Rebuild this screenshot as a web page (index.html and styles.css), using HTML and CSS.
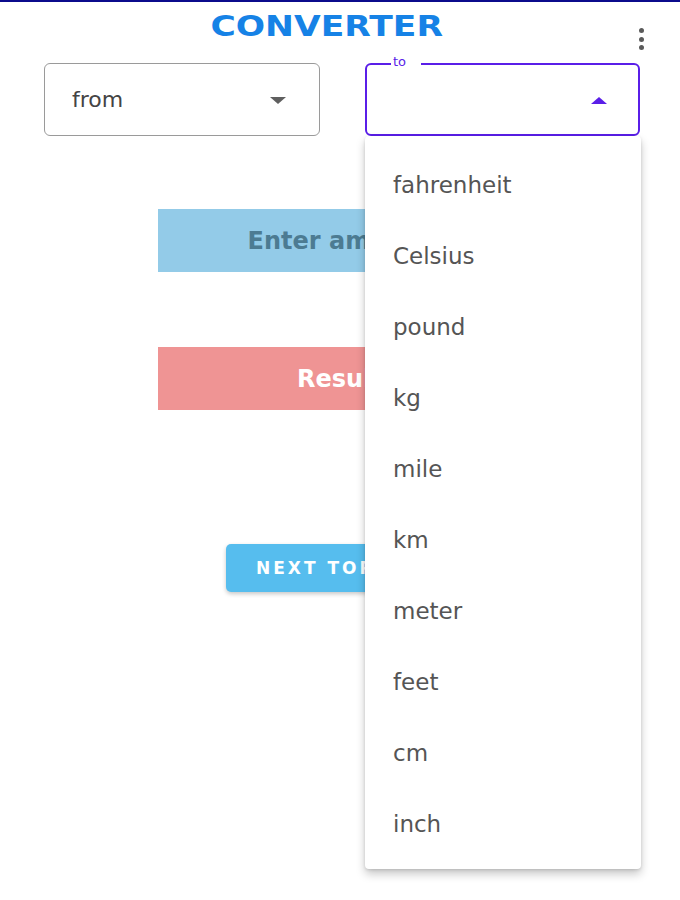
FILE: index.html
```html
<!DOCTYPE html>
<html lang="en">
<head>
<meta charset="utf-8">
<title>Converter</title>
<link rel="stylesheet" href="styles.css">
</head>
<body>
<div class="topline"></div>
<header class="header">
  <div></div>
  <h1 class="title">CONVERTER</h1>
  <div class="more" aria-label="More options"><span></span><span></span><span></span></div>
</header>
<div class="selects">
  <div class="select select-from">
    <span class="select-text">from</span>
    <svg class="caret" width="16" height="7" viewBox="0 0 16 7"><path d="M0 0 H16 L8 7 Z" fill="#5f5f5f"/></svg>
  </div>
  <div class="select select-to">
    <span class="float-label">to</span>
    <span class="select-text"></span>
    <svg class="caret" width="16" height="7" viewBox="0 0 16 7"><path d="M0 7 H16 L8 0 Z" fill="#5a1ee8"/></svg>
    <ul class="menu">
      <li>fahrenheit</li>
      <li>Celsius</li>
      <li>pound</li>
      <li>kg</li>
      <li>mile</li>
      <li>km</li>
      <li>meter</li>
      <li>feet</li>
      <li>cm</li>
      <li>inch</li>
    </ul>
  </div>
</div>
<main class="content">
  <div class="bar bar-input">Enter amount</div>
  <div class="bar bar-result">Result</div>
  <button class="next">NEXT TOPIC</button>
</main>
</body>
</html>
```
FILE: styles.css
```css
* { box-sizing: border-box; }
html, body { margin: 0; padding: 0; background: #fff; }
body {
  font-family: "DejaVu Sans", "Liberation Sans", sans-serif;
  width: 680px;
  height: 900px;
  overflow: hidden;
}
.topline { height: 2px; background: #0b0b8c; }
.header {
  display: grid;
  grid-template-columns: 1fr auto 1fr;
  height: 61px;
}
.title {
  margin: 7px 0 0;
  font-family: "DejaVu Sans", sans-serif;
  font-weight: bold;
  font-size: 29px;
  line-height: 34px;
  color: #1682e6;
  transform: translateX(-13px) scaleX(1.19);
  align-self: start;
}
.more {
  justify-self: end;
  margin: 26px 36px 0 0;
  display: flex;
  flex-direction: column;
  gap: 3.5px;
  align-self: start;
}
.more span {
  display: block;
  width: 5px;
  height: 5px;
  border-radius: 50%;
  background: #5a5a5a;
}
.selects {
  display: flex;
  gap: 45px;
  padding: 0 40px 0 44px;
}
.select {
  position: relative;
  height: 73px;
  display: flex;
  align-items: center;
  justify-content: space-between;
  border-radius: 6px;
}
.select-from {
  width: 276px;
  border: 1px solid #9a9a9a;
  padding: 0 33px 0 27px;
}
.select-to {
  width: 275px;
  border: 2px solid #5a1ee8;
  padding: 0 31px 0 26px;
  z-index: 5;
}
.select-text {
  font-size: 22px;
  color: #444;
}
.select-from .select-text { margin-top: -1px; }
.select-from .caret { margin-top: 2px; }
.select-to .caret { margin-left: auto; margin-top: 2px; }
.float-label {
  position: absolute;
  top: -11px;
  left: 24px;
  background: #fff;
  padding: 0 15px 0 2px;
  font-size: 13px;
  line-height: 16px;
  color: #5a1ee8;
}
.menu {
  position: absolute;
  top: calc(100% + 2px);
  left: -2px;
  width: 276px;
  margin: 0;
  padding: 12px 0 11px;
  list-style: none;
  background: #fff;
  border-radius: 4px;
  box-shadow: 0 5px 10px rgba(0,0,0,0.22), 0 1px 3px rgba(0,0,0,0.12);
}
.menu li {
  height: 71px;
  display: flex;
  align-items: center;
  padding: 2px 0 0 28px;
  font-size: 23px;
  color: #555;
}
.content {
  display: flex;
  flex-direction: column;
  align-items: center;
  margin-top: 73px;
}
.bar {
  width: 364px;
  height: 63px;
  display: flex;
  align-items: center;
  justify-content: center;
  font-weight: bold;
  font-size: 24px;
}
.bar-input {
  background: #93cbe8;
  color: #4c7b92;
}
.bar-result {
  margin-top: 75px;
  background: #ef9494;
  color: #fff;
}
.next {
  margin-top: 134px;
  width: 228px;
  height: 48px;
  border: none;
  border-radius: 5px;
  background: #56bdee;
  box-shadow: 0 2px 4px rgba(0,0,0,0.22);
  color: #fff;
  font-family: "DejaVu Sans", sans-serif;
  font-weight: bold;
  font-size: 17px;
  letter-spacing: 3px;
  text-align: left;
  padding: 0 0 0 30px;
}
```
